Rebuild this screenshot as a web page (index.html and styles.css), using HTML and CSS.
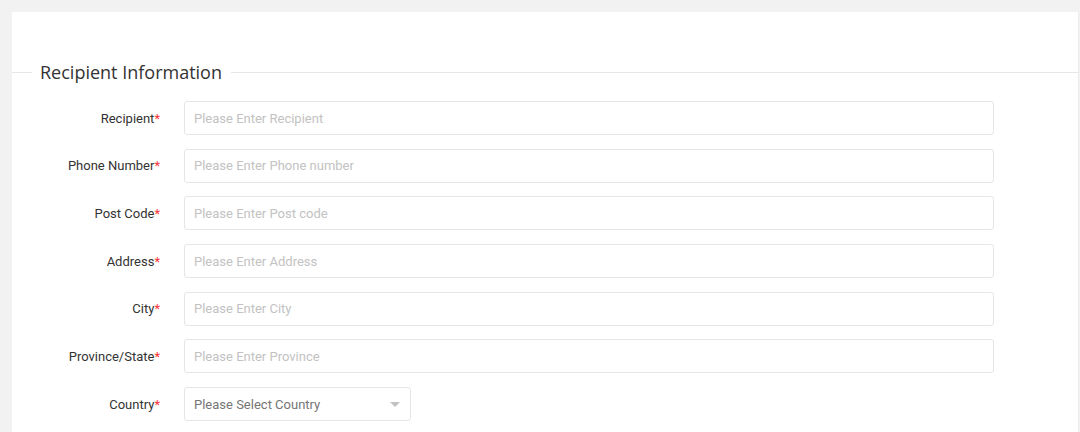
FILE: index.html
```html
<!DOCTYPE html>
<html lang="en">
<head>
  <meta charset="UTF-8" />
  <title>Recipient Information</title>
  <link rel="stylesheet" href="styles.css">
</head>
<body>
  <div class="card">
    <div class="section-title"><span>Recipient Information</span></div>

    <form class="form">
      <div class="form-row">
        <label class="form-label">Recipient<i>*</i></label>
        <input class="form-input" type="text" placeholder="Please Enter Recipient" />
      </div>
      <div class="form-row">
        <label class="form-label">Phone Number<i>*</i></label>
        <input class="form-input" type="text" placeholder="Please Enter Phone number" />
      </div>
      <div class="form-row">
        <label class="form-label">Post Code<i>*</i></label>
        <input class="form-input" type="text" placeholder="Please Enter Post code" />
      </div>
      <div class="form-row">
        <label class="form-label">Address<i>*</i></label>
        <input class="form-input" type="text" placeholder="Please Enter Address" />
      </div>
      <div class="form-row">
        <label class="form-label">City<i>*</i></label>
        <input class="form-input" type="text" placeholder="Please Enter City" />
      </div>
      <div class="form-row">
        <label class="form-label">Province/State<i>*</i></label>
        <input class="form-input" type="text" placeholder="Please Enter Province" />
      </div>
      <div class="form-row">
        <label class="form-label">Country<i>*</i></label>
        <div class="form-select">
          <span>Please Select Country</span>
          <span class="caret"></span>
        </div>
      </div>
    </form>
  </div>
</body>
</html>
```

FILE: styles.css
```css
body {
  margin: 0;
  padding: 12px 1px 0 12px;
  background: #f2f2f2;
  font-family: Roboto, "Open Sans", sans-serif;
  color: #333;
  height: 420px;
  overflow: hidden;
}

.card {
  background: #fff;
  border-right: 1px solid #ececec;
  height: 100%;
  padding-top: 50px;
  box-sizing: border-box;
}

.section-title {
  display: flex;
  align-items: center;
  height: 20px;
  font-family: "Open Sans", sans-serif;
  font-size: 18px;
  color: #333;
}

.section-title::before,
.section-title::after {
  content: "";
  height: 1px;
  background: #e6e6e6;
}

.section-title::before {
  width: 20px;
}

.section-title::after {
  flex: 1;
}

.section-title span {
  padding: 0 9px 0 8px;
}

.form {
  margin-top: 19px;
}

.form-row {
  display: flex;
  align-items: center;
  margin-bottom: 13.7px;
}

.form-label {
  width: 160px;
  padding-right: 12px;
  box-sizing: border-box;
  text-align: right;
  font-size: 13px;
  color: #333;
}

.form-label i {
  font-style: normal;
  color: #f33;
}

.form-input {
  margin-left: 12px;
  width: 810px;
  height: 34px;
  box-sizing: border-box;
  border: 1px solid #e6e6e6;
  border-radius: 3px;
  padding: 0 9px;
  font-family: inherit;
  font-size: 13px;
  color: #333;
  outline: none;
}

.form-input::placeholder {
  color: #c2c2c2;
}

.form-select {
  margin-left: 12px;
  width: 227px;
  height: 34px;
  box-sizing: border-box;
  border: 1px solid #e6e6e6;
  border-radius: 3px;
  padding: 0 10px 0 9px;
  display: flex;
  align-items: center;
  justify-content: space-between;
  font-size: 13px;
  color: #757575;
}

.caret {
  width: 0;
  height: 0;
  border-left: 5px solid transparent;
  border-right: 5px solid transparent;
  border-top: 5px solid #c2c2c2;
}
```
